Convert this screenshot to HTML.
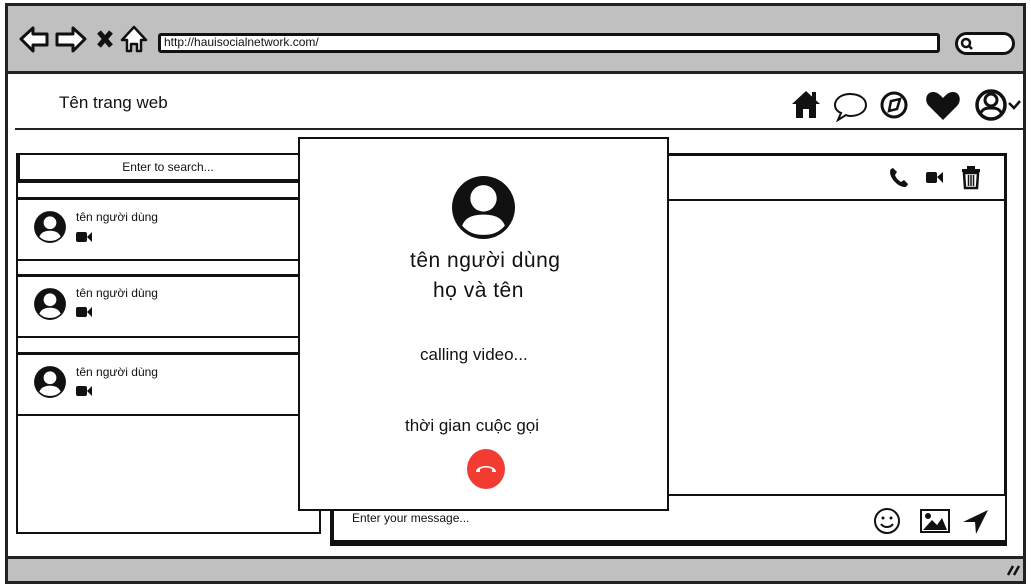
<!DOCTYPE html>
<html><head><meta charset="utf-8"><style>
*{margin:0;padding:0;box-sizing:border-box}
body{width:1031px;height:587px;background:#fff;position:relative;overflow:hidden;font-family:"Liberation Sans","DejaVu Sans",sans-serif;color:#111}
.a{position:absolute}
.b{border:2px solid #111;background:#fff}
.t{position:absolute;white-space:nowrap}
</style></head><body>
<div class="a" style="left:5px;top:3px;width:1021px;height:581px;border:3px solid #222;background:#fff"></div>
<div class="a" style="left:8px;top:6px;width:1015px;height:68px;background:#c0c0c0;border-bottom:3px solid #222"></div>
<svg class="a" style="left:0;top:0" width="160" height="60" viewBox="0 0 160 60">
<path d="M21 39 L33 28 L33 34 L47 34 L47 45 L33 45 L33 51 Z" fill="#fff" stroke="#111" stroke-width="3" stroke-linejoin="round"/>
<path d="M85 39 L73 28 L73 34 L57 34 L57 45 L73 45 L73 51 Z" fill="#fff" stroke="#111" stroke-width="3" stroke-linejoin="round"/>
<path d="M99 32 L111 46 M111 32 L99 46" stroke="#111" stroke-width="5"/>
<path d="M122 40 L134 27 L146 40 L141 40 L141 51 L137 51 L137 44 L131 44 L131 51 L127 51 L127 40 Z" fill="#fff" stroke="#111" stroke-width="2.5" stroke-linejoin="round"/>
</svg>
<div class="a" style="left:158px;top:33px;width:782px;height:20px;border:3px solid #111;border-radius:3px;background:#fff"></div>
<div class="t" style="left:164px;top:35px;font-size:12px">http://hauisocialnetwork.com/</div>
<div class="a" style="left:955px;top:32px;width:60px;height:23px;border:3px solid #111;border-radius:12px;background:#fff"></div>
<svg class="a" style="left:960px;top:37px" width="14" height="14"><circle cx="6" cy="6" r="4" fill="none" stroke="#111" stroke-width="2.5"/><path d="M9 9 L12 12" stroke="#111" stroke-width="2.5"/></svg>
<div class="t" style="left:59px;top:93px;font-size:17px">Tên trang web</div>
<div class="a" style="left:15px;top:128px;width:1008px;height:2px;background:#222"></div>
<svg class="a" style="left:790px;top:86px" width="235" height="36" viewBox="0 0 235 36">
<path d="M2 18 L16 5 L30 18 L26 18 L26 32 L19 32 L19 23 L13 23 L13 32 L6 32 L6 18 Z" fill="#111"/><rect x="22" y="6" width="4" height="8" fill="#111"/>
<path d="M60 8 C50 8 45 14 45 19 C45 23 48 26 51 27 L48 34 L56 29 C58 30 60 30 60 30 C70 30 76 25 76 19 C76 13 70 8 60 8 Z" fill="#fff" stroke="#111" stroke-width="2"/>
<circle cx="104" cy="19" r="12" fill="#fff" stroke="#111" stroke-width="3"/><path d="M99 25 L101 15 L110 13 L107 23 Z" fill="none" stroke="#111" stroke-width="2.5"/>
<path d="M153 34 L139 20 C134 15 136 6 143 6 C148 6 151 10 153 12 C155 10 158 6 163 6 C170 6 172 15 167 20 Z" fill="#111"/>
<circle cx="201" cy="19" r="14" fill="#fff" stroke="#111" stroke-width="3.5"/><circle cx="201" cy="14" r="6" fill="none" stroke="#111" stroke-width="3"/><path d="M190 28 C193 22 197 22 201 22 C205 22 209 22 212 28" fill="none" stroke="#111" stroke-width="3"/>
<path d="M219 17 L224 22 L230 15" fill="none" stroke="#111" stroke-width="2.5"/>
</svg>
<div class="a b" style="left:16px;top:153px;width:305px;height:381px"></div>
<div class="a" style="left:18px;top:153px;width:282px;height:30px;border:2px solid #111;border-bottom:4px solid #111;background:#fff"></div>
<div class="t" style="left:18px;top:160px;width:300px;text-align:center;font-size:12px">Enter to search...</div>
<div class="a b" style="left:16px;top:197px;width:290px;height:64px;border-top-width:3px"></div>
<div class="a b" style="left:16px;top:274px;width:290px;height:64px;border-top-width:3px"></div>
<div class="a b" style="left:16px;top:352px;width:290px;height:64px;border-top-width:3px"></div>
<svg class="a" style="left:33px;top:210px" width="34" height="34" viewBox="0 0 64 64"><circle cx="32" cy="32" r="30" fill="#111"/><circle cx="32" cy="24" r="12" fill="#fff"/><path d="M12 50 C16 41 24 39 32 39 C40 39 48 41 52 50 C46 56 40 58 32 58 C24 58 18 56 12 50Z" fill="#fff"/></svg>
<svg class="a" style="left:33px;top:287px" width="34" height="34" viewBox="0 0 64 64"><circle cx="32" cy="32" r="30" fill="#111"/><circle cx="32" cy="24" r="12" fill="#fff"/><path d="M12 50 C16 41 24 39 32 39 C40 39 48 41 52 50 C46 56 40 58 32 58 C24 58 18 56 12 50Z" fill="#fff"/></svg>
<svg class="a" style="left:33px;top:365px" width="34" height="34" viewBox="0 0 64 64"><circle cx="32" cy="32" r="30" fill="#111"/><circle cx="32" cy="24" r="12" fill="#fff"/><path d="M12 50 C16 41 24 39 32 39 C40 39 48 41 52 50 C46 56 40 58 32 58 C24 58 18 56 12 50Z" fill="#fff"/></svg>
<div class="t" style="left:76px;top:210px;font-size:12px">tên người dùng</div>
<div class="t" style="left:76px;top:286px;font-size:12px">tên người dùng</div>
<div class="t" style="left:76px;top:365px;font-size:12px">tên người dùng</div>
<svg class="a" style="left:76px;top:231px" width="17" height="12"><rect x="0" y="1" width="11" height="10" rx="2" fill="#111"/><path d="M11 6 L16 1 L16 11 Z" fill="#111"/></svg>
<svg class="a" style="left:76px;top:306px" width="17" height="12"><rect x="0" y="1" width="11" height="10" rx="2" fill="#111"/><path d="M11 6 L16 1 L16 11 Z" fill="#111"/></svg>
<svg class="a" style="left:76px;top:385px" width="17" height="12"><rect x="0" y="1" width="11" height="10" rx="2" fill="#111"/><path d="M11 6 L16 1 L16 11 Z" fill="#111"/></svg>
<div class="a b" style="left:330px;top:153px;width:677px;height:393px;border-width:3px"></div>
<div class="a" style="left:330px;top:199px;width:677px;height:2px;background:#111"></div>
<div class="a" style="left:332px;top:494px;width:673px;height:50px;border-top:2px solid #111;border-bottom:4px solid #111;border-left:2px solid #111;background:#fff"></div>
<div class="t" style="left:352px;top:511px;font-size:12px">Enter your message...</div>
<svg class="a" style="left:886px;top:164px" width="100" height="28" viewBox="0 0 100 28">
<path d="M5 5 C3 7 4 13 9 18 C14 23 19 24 21 22 L22 20 L18 16 L15 18 C12 16 10 14 9 11 L11 8 L7 4 Z" fill="#111"/>
<rect x="40" y="8" width="11" height="11" rx="2" fill="#111"/><path d="M51 13 L57 8 L57 19 Z" fill="#111"/>
<rect x="76" y="5" width="18" height="3" fill="#111"/><rect x="81" y="2" width="8" height="3" fill="#111"/><path d="M78 9 L92 9 L91 24 L79 24 Z" fill="none" stroke="#111" stroke-width="2.5"/><path d="M82.5 11 V22 M85 11 V22 M87.5 11 V22" stroke="#111" stroke-width="1.5"/>
</svg>
<svg class="a" style="left:872px;top:505px" width="122" height="32" viewBox="0 0 122 32">
<circle cx="15" cy="16" r="12" fill="none" stroke="#111" stroke-width="2"/><circle cx="11" cy="13" r="1.5" fill="#111"/><circle cx="19" cy="13" r="1.5" fill="#111"/><path d="M9 19 C12 23 18 23 21 19" fill="none" stroke="#111" stroke-width="2"/>
<rect x="49" y="5" width="28" height="22" fill="#fff" stroke="#111" stroke-width="2"/><circle cx="56" cy="11" r="3" fill="#111"/><path d="M51 25 L60 15 L65 20 L70 13 L75 25 Z" fill="#111"/>
<path d="M116 5 L91 17 L103 17 L104 29 Z" fill="#111"/>
</svg>
<div class="a" style="left:8px;top:556px;width:1015px;height:25px;background:#c0c0c0;border-top:3px solid #222"></div>
<svg class="a" style="left:1005px;top:563px" width="16" height="14"><path d="M3 12 L8 3 M9 12 L14 3" stroke="#111" stroke-width="2.5"/></svg>
<div class="a b" style="left:298px;top:137px;width:371px;height:374px"></div>
<svg class="a" style="left:451px;top:175px" width="65" height="65" viewBox="0 0 64 64"><circle cx="32" cy="32" r="31" fill="#111"/><circle cx="32" cy="23" r="13" fill="#fff"/><path d="M11 50 C14 41 23 39 32 39 C41 39 50 41 53 50 C47 57 40 59 32 59 C24 59 17 57 11 50Z" fill="#fff"/></svg>
<div class="t" style="left:410px;top:249px;font-size:21px;letter-spacing:0.5px">tên người dùng</div>
<div class="t" style="left:433px;top:279px;font-size:21px;letter-spacing:0.5px">họ và tên</div>
<div class="t" style="left:420px;top:345px;font-size:17px">calling video...</div>
<div class="t" style="left:405px;top:416px;font-size:17px">thời gian cuộc gọi</div>
<svg class="a" style="left:466px;top:449px" width="40" height="40" viewBox="0 0 40 40"><ellipse cx="20" cy="20" rx="19" ry="20" fill="#f23c32"/><path d="M10 23 C10 15 30 15 30 23 L26 23 L26 20 C22 18 18 18 14 20 L14 23 Z" fill="#fff"/></svg>
</body></html>
